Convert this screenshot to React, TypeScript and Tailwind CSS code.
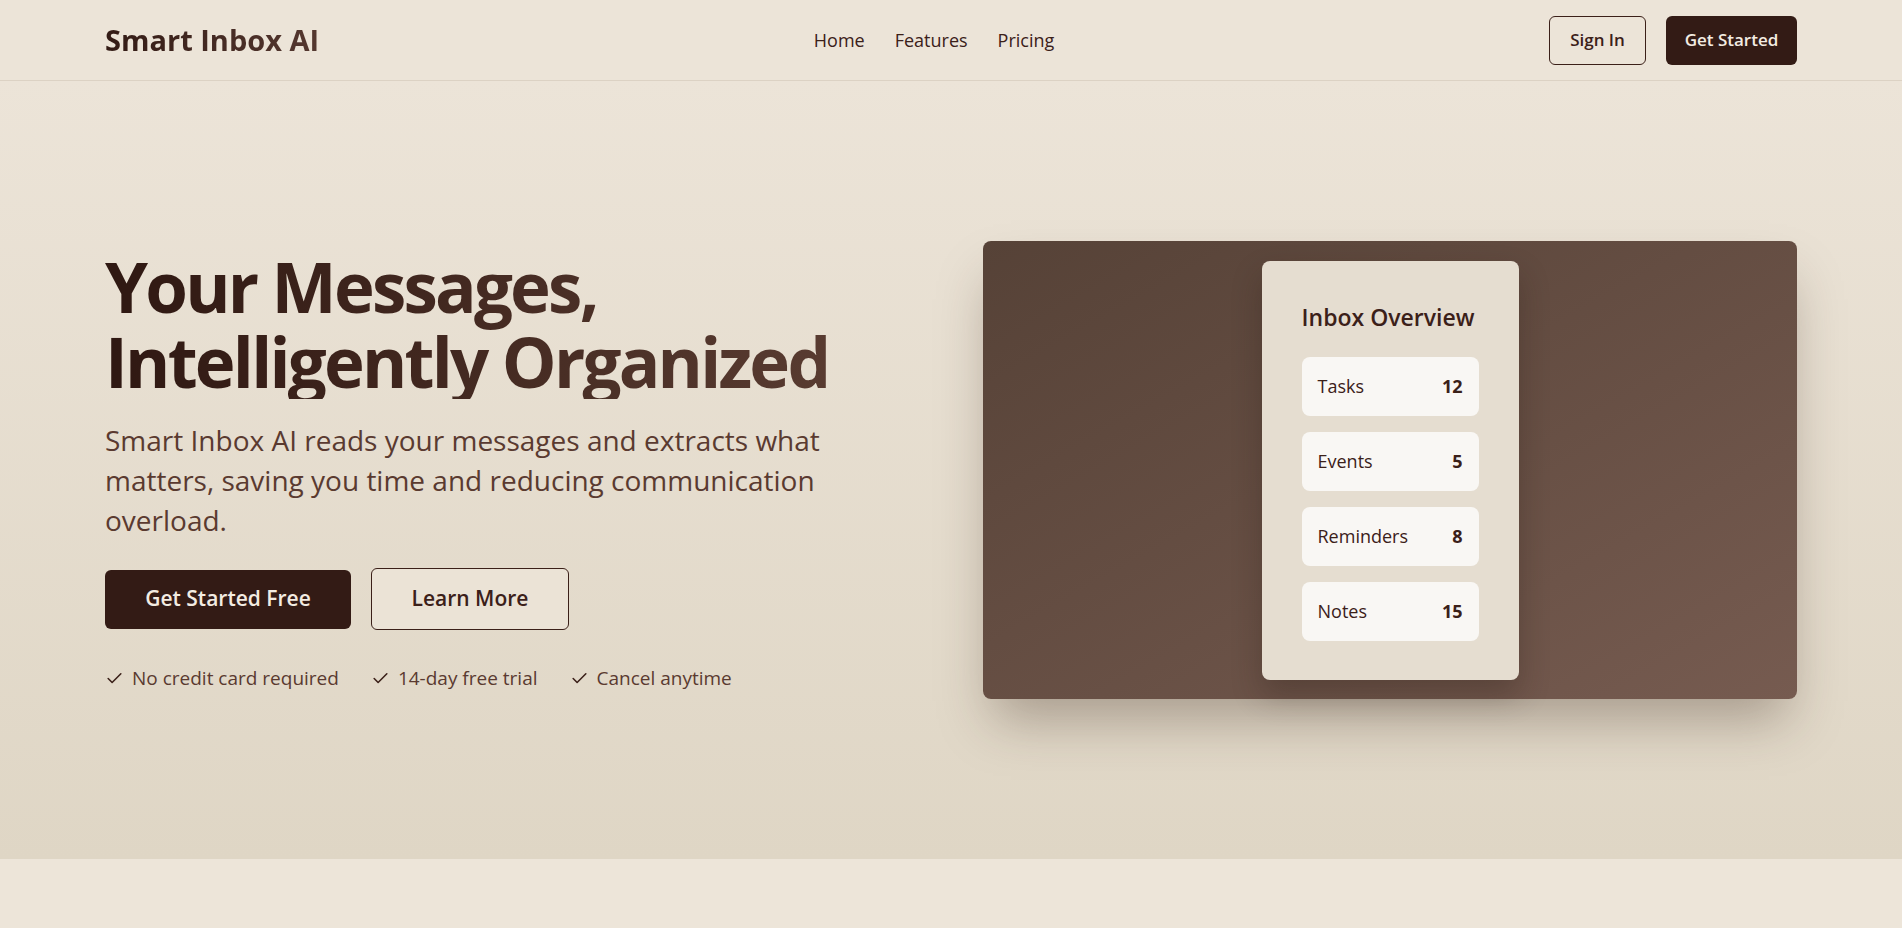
import React from 'react'
import { Check } from 'lucide-react'

const stats = [
  { label: 'Tasks', value: 12 },
  { label: 'Events', value: 5 },
  { label: 'Reminders', value: 8 },
  { label: 'Notes', value: 15 },
]

const perks = ['No credit card required', '14-day free trial', 'Cancel anytime']

function Header() {
  return (
    <header className="h-[81px] border-b border-[#dcd2c4] bg-[#ece4d8]">
      <div className="h-full px-[105px] flex items-center justify-between">
        <div className="text-[29px] font-bold text-[#3b2019] bg-gradient-to-r from-[#331b15] to-[#553830] bg-clip-text text-transparent">Smart Inbox AI</div>
        <nav className="flex items-center gap-[30px] text-[18px] text-[#3b2019]">
          <a href="#">Home</a>
          <a href="#">Features</a>
          <a href="#">Pricing</a>
        </nav>
        <div className="flex items-center gap-5">
          <button className="h-[49px] w-[97px] rounded-md border border-[#3b2019] text-[17px] font-semibold text-[#3b2019]">Sign In</button>
          <button className="h-[49px] w-[131px] rounded-md bg-[#331b15] text-[17px] font-semibold text-[#f3ece2]">Get Started</button>
        </div>
      </div>
    </header>
  )
}

function InboxCard() {
  return (
    <div className="h-[458px] rounded-lg bg-gradient-to-br from-[#564237] to-[#765b50] shadow-[0_30px_50px_-10px_rgba(60,40,30,0.35)] flex items-center justify-center">
      <div className="w-[257px] h-[419px] rounded-lg bg-[#e5ddd0] shadow-[0_15px_30px_rgba(40,25,20,0.3)] px-10 pt-10">
        <h3 className="text-[23px] leading-8 font-semibold text-[#3b2019] mb-6">Inbox Overview</h3>
        <div className="flex flex-col gap-4">
          {stats.map((s) => (
            <div key={s.label} className="h-[59px] rounded-lg bg-[#f9f7f4] px-4 flex items-center justify-between text-[18px] text-[#3b2019]">
              <span>{s.label}</span>
              <span className="font-bold">{s.value}</span>
            </div>
          ))}
        </div>
      </div>
    </div>
  )
}

export default function App() {
  return (
    <div className="min-h-screen bg-[#ede5d9]" style={{ fontFamily: '"Open Sans", "Noto Sans", sans-serif' }}>
      <Header />
      <section className="h-[778px] bg-gradient-to-b from-[#ece4d8] to-[#dfd6c5]">
        <div className="px-[105px] pt-[160px] grid grid-cols-2 gap-16">
          <div>
            <h1 className="text-[69px] leading-[75px] font-bold tracking-[-0.04em] bg-gradient-to-r from-[#2f1812] to-[#5e4035] bg-clip-text text-transparent mt-[8px]">
              Your Messages,<br />Intelligently Organized
            </h1>
            <p className="mt-[21px] text-[28px] leading-10 text-[#5a3a30] max-w-[740px]">
              Smart Inbox AI reads your messages and extracts what matters, saving you time and reducing communication overload.
            </p>
            <div className="mt-[28px] flex items-center gap-5">
              <button className="h-[59px] w-[246px] rounded-md bg-[#331b15] text-[21px] font-semibold text-[#f3ece2]">Get Started Free</button>
              <button className="h-[62px] w-[198px] rounded-md border border-[#3b2019] bg-[#ebe3d6] text-[21px] font-semibold text-[#3b2019]">Learn More</button>
            </div>
            <div className="mt-[34px] flex items-center gap-8 text-[19px] text-[#5a3a30]">
              {perks.map((p) => (
                <div key={p} className="flex items-center gap-2">
                  <Check className="w-[19px] h-[19px] text-[#3b2019]" strokeWidth={2} />
                  <span>{p}</span>
                </div>
              ))}
            </div>
          </div>
          <InboxCard />
        </div>
      </section>
    </div>
  )
}
